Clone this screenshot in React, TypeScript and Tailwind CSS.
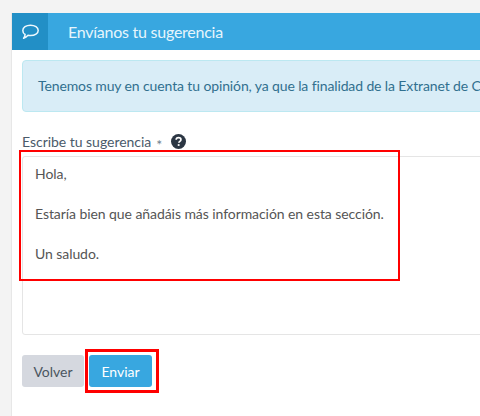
export default function App() {
    return (
        <div className="relative w-[480px] h-[416px] overflow-hidden bg-[#f3f3f3] pt-[13px] pl-[11px] font-['Lato',sans-serif]">
            <div className="w-[520px] h-[403px] bg-white border-l border-[#e7e7e7]">
                <div className="flex h-[37px] bg-[#38a7e0] text-white">
                    <div className="flex w-9 items-center justify-center bg-[#228fc6]">
                        <svg className="w-[19px] h-[16px]" viewBox="0 0 19 16" fill="none" stroke="#eef8fd" strokeWidth="1.5" strokeLinejoin="round">
                            <path d="M9.5 1.2c4.4 0 7.7 2.2 7.7 5.2s-3.3 5.2-7.7 5.2c-.9 0-1.7-.1-2.5-.3-1.2 1.3-2.6 2.3-4.4 2.9.9-1.2 1.4-2.3 1.5-3.7C2.6 9.6 1.8 8.1 1.8 6.4c0-3 3.3-5.2 7.7-5.2z" />
                        </svg>
                    </div>
                    <h2 className="pl-5 text-[16px] leading-[37px] tracking-[-0.25px] text-[#e6f5fc]">Envíanos tu sugerencia</h2>
                </div>
                <div className="pl-[10px]">
                    <div className="mt-[10px] h-[52px] w-[520px] rounded-[4px] border border-[#bce8f1] bg-[#d9edf7] pl-[15px] text-[14px] leading-[50px] tracking-[-0.12px] whitespace-nowrap text-[#31708f]">
                        Tenemos muy en cuenta tu opinión, ya que la finalidad de la Extranet de Clientes es
                    </div>
                    <div className="mt-[19px] flex h-[20px] items-center text-[14px] tracking-[-0.03px] text-[#4a5a6a]">
                        <label>Escribe tu sugerencia</label>
                        <span className="ml-[5px] h-[14px] text-[#6f7e8d]">*</span>
                        <svg className="ml-[9px] w-[15px] h-[15px]" viewBox="0 0 16 16">
                            <circle cx="8" cy="8" r="8" fill="#2b3643" />
                            <path d="M5.5 6.2c0-1.5 1.1-2.3 2.6-2.3 1.5 0 2.5.9 2.5 2.1 0 1.9-2.2 1.8-2.2 3.4" fill="none" stroke="#fff" strokeWidth="1.8" />
                            <rect x="7.2" y="10.8" width="1.9" height="1.9" fill="#fff" />
                        </svg>
                    </div>
                    <div className="mt-[5px] h-[179px] w-[520px] rounded-[3px] border border-[#e5e5e5] bg-white pt-[7px] pl-3 text-[14px] leading-[20px] tracking-[-0.07px] text-[#555]">
                        <p>Hola,</p>
                        <p className="mt-5">Estaría bien que añadáis más información en esta sección.</p>
                        <p className="mt-5">Un saludo.</p>
                    </div>
                    <div className="mt-[20px] flex gap-[5px] text-[14px]">
                        <button className="h-8 w-[62px] rounded-[3px] bg-[#d5d8df] text-[#4a5560]">Volver</button>
                        <button className="h-8 w-[63px] rounded-[3px] bg-[#38a7e0] text-white">Enviar</button>
                    </div>
                </div>
            </div>
            {/* red annotation boxes */}
            <div className="absolute left-[19px] top-[150px] w-[381px] h-[131px] border-2 border-[#f00]"></div>
            <div className="absolute left-[85px] top-[349px] w-[74px] h-[44px] border-[3px] border-[#f00]"></div>
        </div>
    );
}
